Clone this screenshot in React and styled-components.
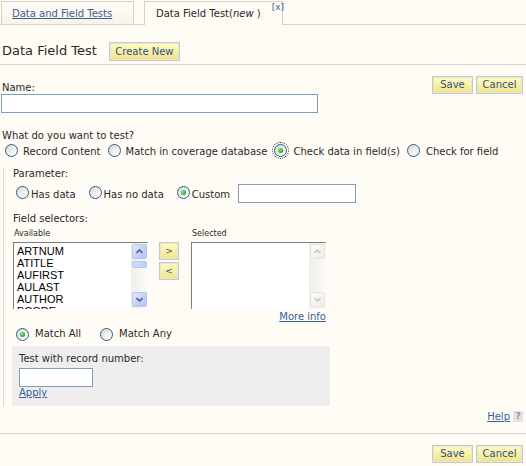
import React from 'react';
import styled, { createGlobalStyle, css } from 'styled-components';

const GlobalStyle = createGlobalStyle`
  html, body {
    margin: 0;
    padding: 0;
    background: #fffbf5;
  }
  body {
    font-family: "DejaVu Sans", Verdana, sans-serif;
    font-size: 10px;
    line-height: 12px;
    color: #2a2a2a;
  }
`;

const Page = styled.div`
  width: 526px;
  min-height: 466px;
  background: #fffbf5;
`;

const TabBar = styled.div`
  display: flex;
  align-items: flex-end;
  height: 23px;
  padding: 1px 0 0 1px;
  border-bottom: 1px solid #d6d2cb;
`;

const Tab = styled.div`
  position: relative;
  box-sizing: border-box;
  width: ${p => p.$width}px;
  height: ${p => (p.$active ? 24 : 23)}px;
  margin-left: ${p => p.$offset || 0}px;
  margin-bottom: ${p => (p.$active ? -1 : 0)}px;
  padding: 6px 0 0 ${p => p.$pad}px;
  border: 1px solid #d6d2cb;
  border-bottom: none;
  background: ${p => (p.$active ? '#fffbf5' : 'linear-gradient(#fffcf8, #fbf2e6)')};
  white-space: nowrap;
`;

const CloseMark = styled.span`
  position: absolute;
  top: 0;
  right: -2px;
  font-size: 9px;
  line-height: 10px;
  color: #3b5a8c;
`;

const Link = styled.a`
  color: #36609a;
  text-decoration: underline;
  cursor: pointer;
`;

const TitleRow = styled.div`
  display: flex;
  align-items: center;
  gap: 12px;
  padding: 17px 0 3px 2px;
  border-bottom: 1px solid #d6d2cb;
`;

const Title = styled.h1`
  margin: -2px 0 0;
  font-size: 13px;
  line-height: 15px;
  font-weight: normal;
  color: #2a2a2a;
`;

const YellowButton = styled.button`
  box-sizing: border-box;
  height: ${p => p.$h || 18}px;
  width: ${p => (p.$w ? `${p.$w}px` : 'auto')};
  margin: 0;
  padding: 0;
  border: 1px solid #c9c8c2;
  box-shadow: inset 0 0 0 1px #e6e4dc;
  background: linear-gradient(#fffcc4, #f8ef9e 55%, #f0e286);
  color: #2f4f8f;
  font-family: inherit;
  font-size: ${p => p.$fs || 10}px;
  line-height: 1;
  white-space: nowrap;
  cursor: pointer;
`;

const Body = styled.div`
  padding: 0 3px 0 1px;
`;

const NameRow = styled.div`
  display: flex;
  justify-content: space-between;
  align-items: flex-end;
  margin-top: 11px;
`;

const ButtonGroup = styled.div`
  display: flex;
  gap: 3px;
`;

const Label = styled.div`
  margin: ${p => p.$mt || 0}px 0 0 1px;
  white-space: nowrap;
`;

const TextInput = styled.input`
  display: block;
  box-sizing: border-box;
  width: ${p => p.$w}px;
  height: 19px;
  margin: ${p => p.$mt || 0}px 0 0 ${p => p.$ml || 0}px;
  padding: 0 2px;
  border: 1px solid #7f9db9;
  background: #fff;
  font: inherit;
  outline: none;
`;

const RadioRow = styled.div`
  display: flex;
  align-items: ${p => p.$align || 'flex-start'};
  margin-top: ${p => p.$mt || 0}px;
  padding-left: ${p => p.$pl || 0}px;
`;

const Choice = styled.label`
  display: inline-flex;
  align-items: flex-start;
  gap: ${p => p.$gap}px;
  margin-right: ${p => p.$mr}px;
  white-space: nowrap;
`;

const ChoiceText = styled.span`
  margin-top: ${p => p.$dy}px;
`;

const RadioCircle = styled.span`
  position: relative;
  flex: none;
  box-sizing: border-box;
  width: 13px;
  height: 13px;
  border-radius: 50%;
  border: 1px solid #2c5a8c;
  background: linear-gradient(135deg, #d9d9d2 0%, #efefea 50%, #ffffff 100%);
  ${p =>
    p.$checked &&
    css`
      &::after {
        content: '';
        position: absolute;
        left: 3px;
        top: 3px;
        width: 5px;
        height: 5px;
        border-radius: 50%;
        background: radial-gradient(circle at 40% 40%, #8fe88f, #24a524 70%);
      }
    `}
  ${p =>
    p.$focus &&
    css`
      outline: 1px dotted #333;
      outline-offset: 1px;
    `}
`;

const Radio = ({ label, checked, focus, gap = 5, dy = 2, mr = 7 }) => (
  <Choice $gap={gap} $mr={mr}>
    <RadioCircle $checked={checked} $focus={focus} />
    <ChoiceText $dy={dy}>{label}</ChoiceText>
  </Choice>
);

const Section = styled.div`
  margin: 10px 0 0 2px;
  padding-left: 8px;
  border-left: 1px solid #dcdad5;
`;

const Selectors = styled.div`
  display: grid;
  grid-template-columns: 135px 21px 135px;
  column-gap: 11px;
  row-gap: 3px;
  margin: 4px 0 0 1px;
`;

const SmallLabel = styled.div`
  font-size: 8px;
  line-height: 10px;
  margin-left: 1px;
`;

const ListBox = styled.div`
  display: flex;
  box-sizing: border-box;
  width: 135px;
  height: 67px;
  border-top: 1px solid #7f7f74;
  border-left: 1px solid #7f7f74;
  background: #fff;
  overflow: hidden;
`;

const ListItems = styled.div`
  flex: 1;
  overflow: hidden;
  padding: 2px 0 0 3px;
  font-family: "Liberation Sans", Arial, sans-serif;
  font-size: 11px;
  line-height: 12px;
  color: #000;
`;

const ScrollTrack = styled.div`
  display: flex;
  flex-direction: column;
  flex: none;
  box-sizing: border-box;
  width: 17px;
  padding: 1px 1px 2px 1px;
  background: linear-gradient(90deg, #efeee8, #fbfbf8);
`;

const ScrollBtn = styled.div`
  display: flex;
  align-items: center;
  justify-content: center;
  box-sizing: border-box;
  width: 15px;
  height: 15px;
  border-radius: 2px;
  border: 1px solid ${p => (p.$disabled ? '#e4e3dd' : '#b4c7f4')};
  background: ${p =>
    p.$disabled
      ? 'linear-gradient(135deg, #fbfbf9, #edece6)'
      : 'linear-gradient(135deg, #e4ecfe, #c0d2fa 55%, #b0c5f6)'};
  ${p => p.$end && 'margin-top: auto;'}
`;

const Thumb = styled.div`
  box-sizing: border-box;
  width: 15px;
  height: 7px;
  margin-top: 2px;
  border-radius: 2px;
  border: 1px solid #b4c7f4;
  background: linear-gradient(90deg, #cfdcfc, #bccff9);
`;

const MoveButtons = styled.div`
  display: flex;
  flex-direction: column;
  gap: 2px;
`;

const MoreInfo = styled.div`
  width: 313px;
  margin: 2px 0 0 1px;
  text-align: right;
`;

const TestBox = styled.div`
  box-sizing: border-box;
  width: 318px;
  margin-top: 5px;
  padding: 7px;
  background: #eeeeee;
`;

const HelpRow = styled.div`
  display: flex;
  justify-content: flex-end;
  align-items: flex-end;
  gap: 3px;
  margin-top: 5px;
`;

const HelpIcon = styled.span`
  display: inline-flex;
  align-items: center;
  justify-content: center;
  width: 10px;
  height: 11px;
  margin-bottom: 1px;
  background: #e4e4e1;
  color: #8797b5;
  font-size: 9px;
  font-weight: bold;
  line-height: 1;
`;

const Footer = styled.div`
  display: flex;
  justify-content: flex-end;
  gap: 3px;
  margin-top: 10px;
  padding: 11px 3px 0 0;
  border-top: 1px solid #d6d2cb;
`;

const Chevron = ({ down, disabled }) => (
  <svg width="7" height="5" viewBox="0 0 7 5">
    <polyline
      points={down ? '0.5,1 3.5,4 6.5,1' : '0.5,4 3.5,1 6.5,4'}
      fill="none"
      stroke={disabled ? '#c9c8c0' : '#4d6185'}
      strokeWidth="1.6"
    />
  </svg>
);

const ScrollBar = ({ disabled }) => (
  <ScrollTrack>
    <ScrollBtn $disabled={disabled}>
      <Chevron disabled={disabled} />
    </ScrollBtn>
    {!disabled && <Thumb />}
    <ScrollBtn $disabled={disabled} $end>
      <Chevron down disabled={disabled} />
    </ScrollBtn>
  </ScrollTrack>
);

const fields = ['ARTNUM', 'ATITLE', 'AUFIRST', 'AULAST', 'AUTHOR', 'BCODE', 'BTITLE'];

const SaveCancel = () => (
  <ButtonGroup>
    <YellowButton $w={41}>Save</YellowButton>
    <YellowButton $w={47}>Cancel</YellowButton>
  </ButtonGroup>
);

export default function App() {
  return (
    <Page>
      <GlobalStyle />
      <TabBar>
        <Tab $width={133} $pad={10}>
          <Link>Data and Field Tests</Link>
        </Tab>
        <Tab $width={139} $pad={11} $offset={10} $active>
          Data Field Test(<i>new</i> )
          <CloseMark>[x]</CloseMark>
        </Tab>
      </TabBar>

      <TitleRow>
        <Title>Data Field Test</Title>
        <YellowButton $h={19} $w={71}>Create New</YellowButton>
      </TitleRow>

      <Body>
        <NameRow>
          <Label>Name:</Label>
          <SaveCancel />
        </NameRow>
        <TextInput $w={317} />

        <Label $mt={17}>What do you want to test?</Label>
        <RadioRow $mt={2} $pl={4}>
          <Radio label="Record Content" />
          <Radio label="Match in coverage database" />
          <Radio label="Check data in field(s)" checked focus gap={6} />
          <Radio label="Check for field" gap={6} />
        </RadioRow>

        <Section>
          <Label>Parameter:</Label>
          <RadioRow $mt={4} $pl={4} $align="center">
            <Radio label="Has data" gap={2} dy={3} mr={13} />
            <Radio label="Has no data" gap={2} dy={3} mr={13} />
            <Radio label="Custom" checked gap={2} dy={3} mr={8} />
            <TextInput $w={118} />
          </RadioRow>

          <Label $mt={10}>Field selectors:</Label>
          <Selectors>
            <SmallLabel>Available</SmallLabel>
            <span />
            <SmallLabel>Selected</SmallLabel>
            <ListBox>
              <ListItems>
                {fields.map(f => (
                  <div key={f}>{f}</div>
                ))}
              </ListItems>
              <ScrollBar />
            </ListBox>
            <MoveButtons>
              <YellowButton $w={20} $fs={9}>&gt;</YellowButton>
              <YellowButton $w={20} $fs={9}>&lt;</YellowButton>
            </MoveButtons>
            <ListBox>
              <ListItems />
              <ScrollBar disabled />
            </ListBox>
          </Selectors>
          <MoreInfo>
            <Link>More info</Link>
          </MoreInfo>

          <RadioRow $mt={5} $pl={4}>
            <Radio label="Match All" checked gap={6} dy={0} mr={19} />
            <Radio label="Match Any" gap={6} dy={0} />
          </RadioRow>

          <TestBox>
            <div>Test with record number:</div>
            <TextInput $w={74} $mt={3} />
            <Link>Apply</Link>
          </TestBox>
        </Section>

        <HelpRow>
          <Link>Help</Link>
          <HelpIcon>?</HelpIcon>
        </HelpRow>
      </Body>

      <Footer>
        <YellowButton $w={41}>Save</YellowButton>
        <YellowButton $w={47}>Cancel</YellowButton>
      </Footer>
    </Page>
  );
}
